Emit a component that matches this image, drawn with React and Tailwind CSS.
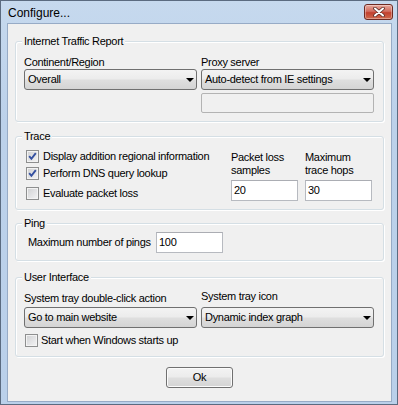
import React from "react";

const selectBg =
  "bg-[linear-gradient(#f3f3f3,#ececec_45%,#dedede_55%,#d4d4d4)]";

function Select({ value }) {
  return (
    <div
      className={`h-[21px] rounded-[3px] border border-[#707070] ${selectBg} flex items-center justify-between pl-[3px] pr-[2px]`}
    >
      <span className="whitespace-nowrap">{value}</span>
      <svg width="8" height="4" viewBox="0 0 8 4" className="shrink-0">
        <path d="M0 0H8L4 4Z" fill="#000" />
      </svg>
    </div>
  );
}

function Input({ value, className = "" }) {
  return (
    <div
      className={`h-[21px] border border-[#b7bac0] border-t-[#abadb3] bg-white flex items-center pl-[2px] ${className}`}
    >
      {value}
    </div>
  );
}

function Check({ checked, label, gap = "gap-[4px]" }) {
  return (
    <div className={`h-[17px] flex items-center ${gap}`}>
      <span className="w-[13px] h-[13px] shrink-0 border border-[#8e8f8f] bg-[linear-gradient(135deg,#cfd0d2,#f4f4f5)] shadow-[inset_0_0_0_1px_#f3f3f3] flex items-center justify-center">
        {checked && (
          <svg width="11" height="11" viewBox="0 0 11 11">
            <path
              d="M2.2 5.2 L4.4 7.8 L8.8 2.2"
              fill="none"
              stroke="#3450a0"
              strokeWidth="1.9"
            />
          </svg>
        )}
      </span>
      <span className="whitespace-nowrap">{label}</span>
    </div>
  );
}

function Group({ title, className = "", children }) {
  return (
    <div
      className={`relative rounded-[3px] border border-[#d5dfe5] shadow-[1px_1px_0_#fff,inset_1px_1px_0_#fff] ${className}`}
    >
      <span className="absolute left-[6px] top-[-7px] px-[2px] bg-[#f0f0f0] leading-[13px] whitespace-nowrap">
        {title}
      </span>
      {children}
    </div>
  );
}

export default function App() {
  return (
    <div className="w-[398px] h-[405px] flex flex-col border border-[#5b6b80] bg-[linear-gradient(#c6d9ee,#bcd1ea_30%,#bad0ea)] pl-[6px] pr-[5px] pb-[2px] font-['Liberation_Sans',Arial,sans-serif] text-black overflow-hidden">
      <div className="h-[22px] shrink-0 flex items-start justify-between">
        <span className="pl-[1px] pt-[5px] text-[12px] leading-[14px]">
          Configure...
        </span>
        <div className="mt-[3px] mr-[-1px] w-[29px] h-[16px] rounded-[3px] border border-[#6e2a22] bg-[linear-gradient(#e8a89c,#d26d5f_45%,#c2402e_55%,#cf6a4e)] shadow-[inset_0_0_0_1px_rgba(255,255,255,0.35)] flex items-center justify-center">
          <svg width="12" height="10" viewBox="0 0 12 10">
            <path
              d="M2 1.5 L10 8.5 M10 1.5 L2 8.5"
              stroke="#5a2a24"
              strokeWidth="3.6"
              strokeLinecap="round"
            />
            <path
              d="M2 1.5 L10 8.5 M10 1.5 L2 8.5"
              stroke="#fff"
              strokeWidth="2"
              strokeLinecap="round"
            />
          </svg>
        </div>
      </div>

      <div className="flex-1 bg-[#f0f0f0] border border-[#97abc6] flex flex-col px-[7px] text-[11px] leading-[13px] tracking-[-0.3px]">
        <Group title="Internet Traffic Report" className="mt-[17px]">
          <div className="grid grid-cols-2 gap-x-[4px] pl-[8px] pr-[9px] pt-[14px] pb-[8px]">
            <div className="flex flex-col">
              <span>Continent/Region</span>
              <Select value="Overall" />
            </div>
            <div className="flex flex-col">
              <span>Proxy server</span>
              <Select value="Auto-detect from IE settings" />
              <div className="mt-[3px] h-[20px] rounded-[2px] border border-[#b3b3b3] bg-[#f0f0f0]" />
            </div>
          </div>
        </Group>

        <Group title="Trace" className="mt-[14px]">
          <div className="flex items-start pl-[10px] pr-[11px] pb-[7px]">
            <div className="flex-1 flex flex-col pt-[11px]">
              <Check checked label="Display addition regional information" />
              <Check checked label="Perform DNS query lookup" />
              <div className="mt-[3px]">
                <Check label="Evaluate packet loss" />
              </div>
            </div>
            <div className="w-[67px] flex flex-col pt-[14px]">
              <span>
                Packet loss
                <br />
                samples
              </span>
              <Input value="20" className="mt-[3px]" />
            </div>
            <div className="w-[67px] ml-[7px] flex flex-col pt-[14px]">
              <span>
                Maximum
                <br />
                trace hops
              </span>
              <Input value="30" className="mt-[3px]" />
            </div>
          </div>
        </Group>

        <Group title="Ping" className="mt-[13px]">
          <div className="flex items-center pl-[12px] pt-[8px] pb-[7px]">
            <span className="w-[128px] whitespace-nowrap">
              Maximum number of pings
            </span>
            <Input value="100" className="w-[67px]" />
          </div>
        </Group>

        <Group title="User Interface" className="mt-[16px]">
          <div className="pl-[8px] pr-[9px] pb-[7px]">
            <div className="grid grid-cols-2 gap-x-[4px]">
              <div className="flex flex-col pt-[14px]">
                <span className="whitespace-nowrap">
                  System tray double-click action
                </span>
                <div className="mt-[2px]">
                  <Select value="Go to main website" />
                </div>
              </div>
              <div className="flex flex-col pt-[12px]">
                <span className="whitespace-nowrap">System tray icon</span>
                <div className="mt-[4px]">
                  <Select value="Dynamic index graph" />
                </div>
              </div>
            </div>
            <div className="mt-[4px] ml-[1px]">
              <Check label="Start when Windows starts up" gap="gap-[3px]" />
            </div>
          </div>
        </Group>

        <div className="mt-[10px] flex justify-center">
          <div
            className={`w-[67px] h-[21px] rounded-[3px] border border-[#707070] ${selectBg} shadow-[inset_0_0_0_1px_#fbfbfb] flex items-center justify-center`}
          >
            Ok
          </div>
        </div>
      </div>
    </div>
  );
}
